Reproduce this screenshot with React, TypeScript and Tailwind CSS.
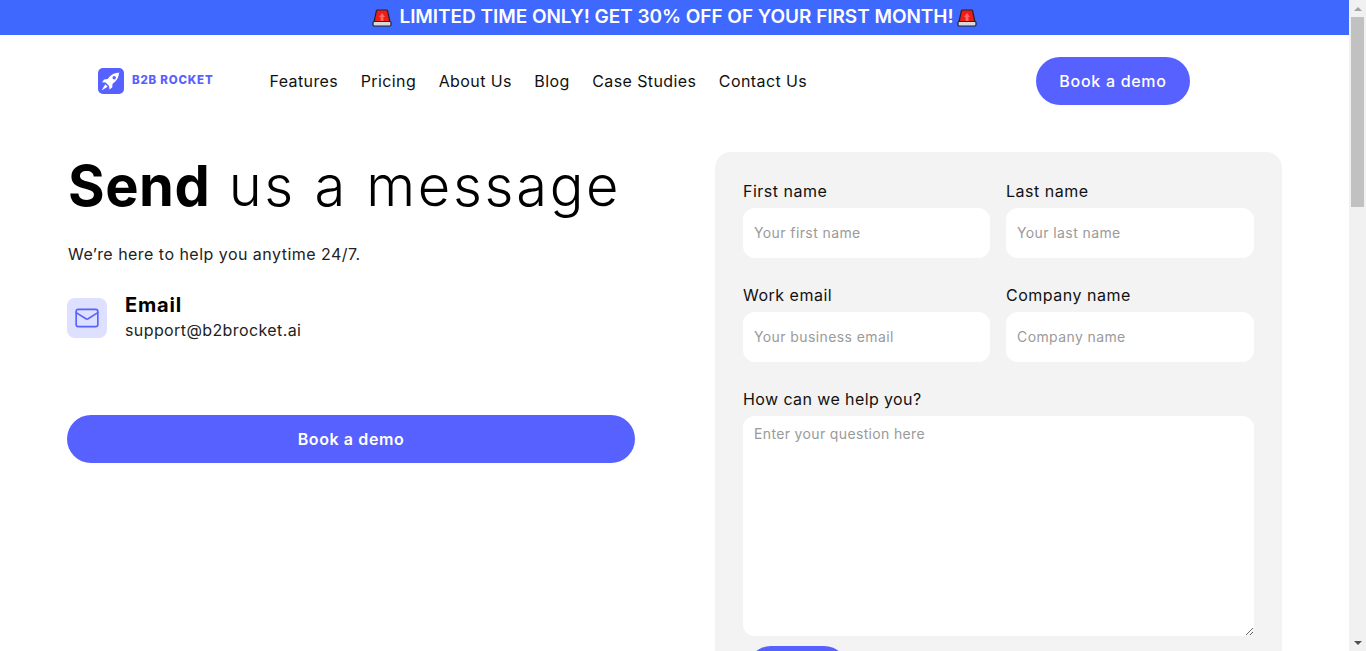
import { Mail } from "lucide-react"

const navLinks = ["Features", "Pricing", "About Us", "Blog", "Case Studies", "Contact Us"]

function Siren() {
  return (
    <svg width="20" height="18" viewBox="0 0 20 18" className="shrink-0">
      <path d="M5.5 1h9c.6 0 1 .3 1.1.9L18 13H2L4.4 1.9C4.5 1.3 4.9 1 5.5 1z" fill="#f01c1c" stroke="#222" strokeWidth="1.2" strokeLinejoin="round" />
      <path d="M10 4l3 4h-1.6v4H8.6V8H7z" fill="#ff6a5c" />
      <rect x="1" y="12.5" width="18" height="4.5" rx="1.2" fill="#d9d9d9" stroke="#222" strokeWidth="1.2" />
    </svg>
  )
}

function Logo() {
  return (
    <div className="flex items-center gap-[8px]">
      <svg width="26" height="26" viewBox="0 0 26 26">
        <rect width="26" height="26" rx="5" fill="#5661ff" />
        <path d="M21.5 4.5c-4.5.2-7.8 1.7-10.3 4.6l-1.5 1.9-3.6.4-2.1 2.8 3.7.3 3.4 3.4.3 3.6 2.8-2.1.4-3.6 1.9-1.5c2.9-2.5 4.4-5.8 4.6-10.3z" fill="#fff" />
        <circle cx="16.2" cy="9.8" r="1.7" fill="#5661ff" />
        <path d="M7.3 16.3L3.5 22.5l6.2-3.8z" fill="#fff" />
      </svg>
      <span className="text-[11.5px] font-extrabold tracking-[0.8px] text-[#5661ff]">B2B ROCKET</span>
    </div>
  )
}

function Field({ label, placeholder }: { label: string; placeholder: string }) {
  return (
    <div className="flex flex-col">
      <label className="h-[32px] pt-[3px] text-[16px] leading-[24px] tracking-[0.5px] text-[#111]">{label}</label>
      <input
        placeholder={placeholder}
        className="h-[50px] w-full rounded-[12px] bg-white px-[11px] pb-[1px] text-[14px] tracking-[0.4px] outline-none placeholder:text-[#9a9a9a]"
      />
    </div>
  )
}

function Scrollbar() {
  return (
    <div className="flex h-full w-[17px] shrink-0 flex-col items-center bg-[#f1f1f1]">
      <div className="flex h-[17px] w-full items-center justify-center">
        <div className="h-0 w-0 border-x-[4px] border-b-[4px] border-x-transparent border-b-[#a3a3a3]" />
      </div>
      <div className="h-[190px] w-[13px] bg-[#c1c1c1]" />
      <div className="flex-1" />
      <div className="flex h-[17px] w-full items-center justify-center">
        <div className="h-0 w-0 border-x-[4px] border-t-[4px] border-x-transparent border-t-[#505050]" />
      </div>
    </div>
  )
}

export default function App() {
  return (
    <div className="flex h-[651px] w-[1366px] overflow-hidden bg-white font-['Inter',sans-serif] text-black">
      <div className="flex min-w-0 flex-1 flex-col">
        <div className="flex h-[35px] shrink-0 items-center justify-center bg-[#3f68ff] text-[19px] font-semibold text-white">
          <Siren />
          <span className="ml-[7px] mr-[3px] tracking-[-0.04px]">LIMITED TIME ONLY! GET 30% OFF OF YOUR FIRST MONTH!</span>
          <Siren />
        </div>

        <header className="flex h-[92px] shrink-0 items-center pl-[98px] pr-[159px]">
          <Logo />
          <nav className="ml-[56px] flex gap-[22.5px] text-[16px] tracking-[0.4px] text-[#111]">
            {navLinks.map((link) => (
              <a key={link}>{link}</a>
            ))}
          </nav>
          <button className="ml-auto h-[48px] w-[154px] rounded-full bg-[#5661ff] text-[16px] font-medium tracking-[0.7px] text-white">
            Book a demo
          </button>
        </header>

        <main className="flex shrink-0 items-start pl-[67px] pr-[67px] pt-[25px]">
          <section className="w-[568px] shrink-0">
            <h1 className="ml-[1px] mt-[-2px] text-[56px] leading-[72px] font-light tracking-[2.7px]">
              <span className="font-bold tracking-[0.5px]">Send</span> us a message
            </h1>
            <p className="ml-[1px] mt-[20px] text-[16px] leading-[24px] tracking-[0.47px] text-[#222]">
              We’re here to help you anytime 24/7.
            </p>
            <div className="mt-[28px] flex items-center gap-[18px]">
              <div className="flex h-[40px] w-[40px] items-center justify-center rounded-[8px] bg-[#dde0ff]">
                <Mail size={26} strokeWidth={1.5} className="text-[#5661ff]" />
              </div>
              <div>
                <div className="mb-[1px] mt-[-1px] text-[20px] leading-[24px] font-bold tracking-[0.8px]">Email</div>
                <div className="text-[16px] leading-[24px] tracking-[0.4px] text-[#222]">support@b2brocket.ai</div>
              </div>
            </div>
            <button className="mt-[73px] h-[48px] w-full rounded-full bg-[#5661ff] text-[16px] font-semibold tracking-[0.6px] text-white">
              Book a demo
            </button>
          </section>

          <section className="ml-[80px] h-[560px] w-[567px] shrink-0 rounded-[16px] bg-[#f3f3f3] px-[28px] pt-[24px]">
            <div className="grid grid-cols-[247px_248px] gap-x-[16px] gap-y-[22px]">
              <Field label="First name" placeholder="Your first name" />
              <Field label="Last name" placeholder="Your last name" />
              <Field label="Work email" placeholder="Your business email" />
              <Field label="Company name" placeholder="Company name" />
            </div>
            <label className="mt-[22px] block h-[32px] pt-[3px] text-[16px] leading-[24px] tracking-[0.4px] text-[#111]">
              How can we help you?
            </label>
            <textarea
              placeholder="Enter your question here"
              className="block h-[220px] w-[511px] rounded-[12px] bg-white px-[11px] py-[7px] text-[14px] tracking-[0.35px] outline-none placeholder:text-[#9a9a9a]"
            />
            <button className="ml-[4px] mt-[10px] h-[48px] w-[101px] rounded-full bg-[#5661ff] text-[16px] font-medium text-white">
              Submit
            </button>
          </section>
        </main>
      </div>
      <Scrollbar />
    </div>
  )
}
